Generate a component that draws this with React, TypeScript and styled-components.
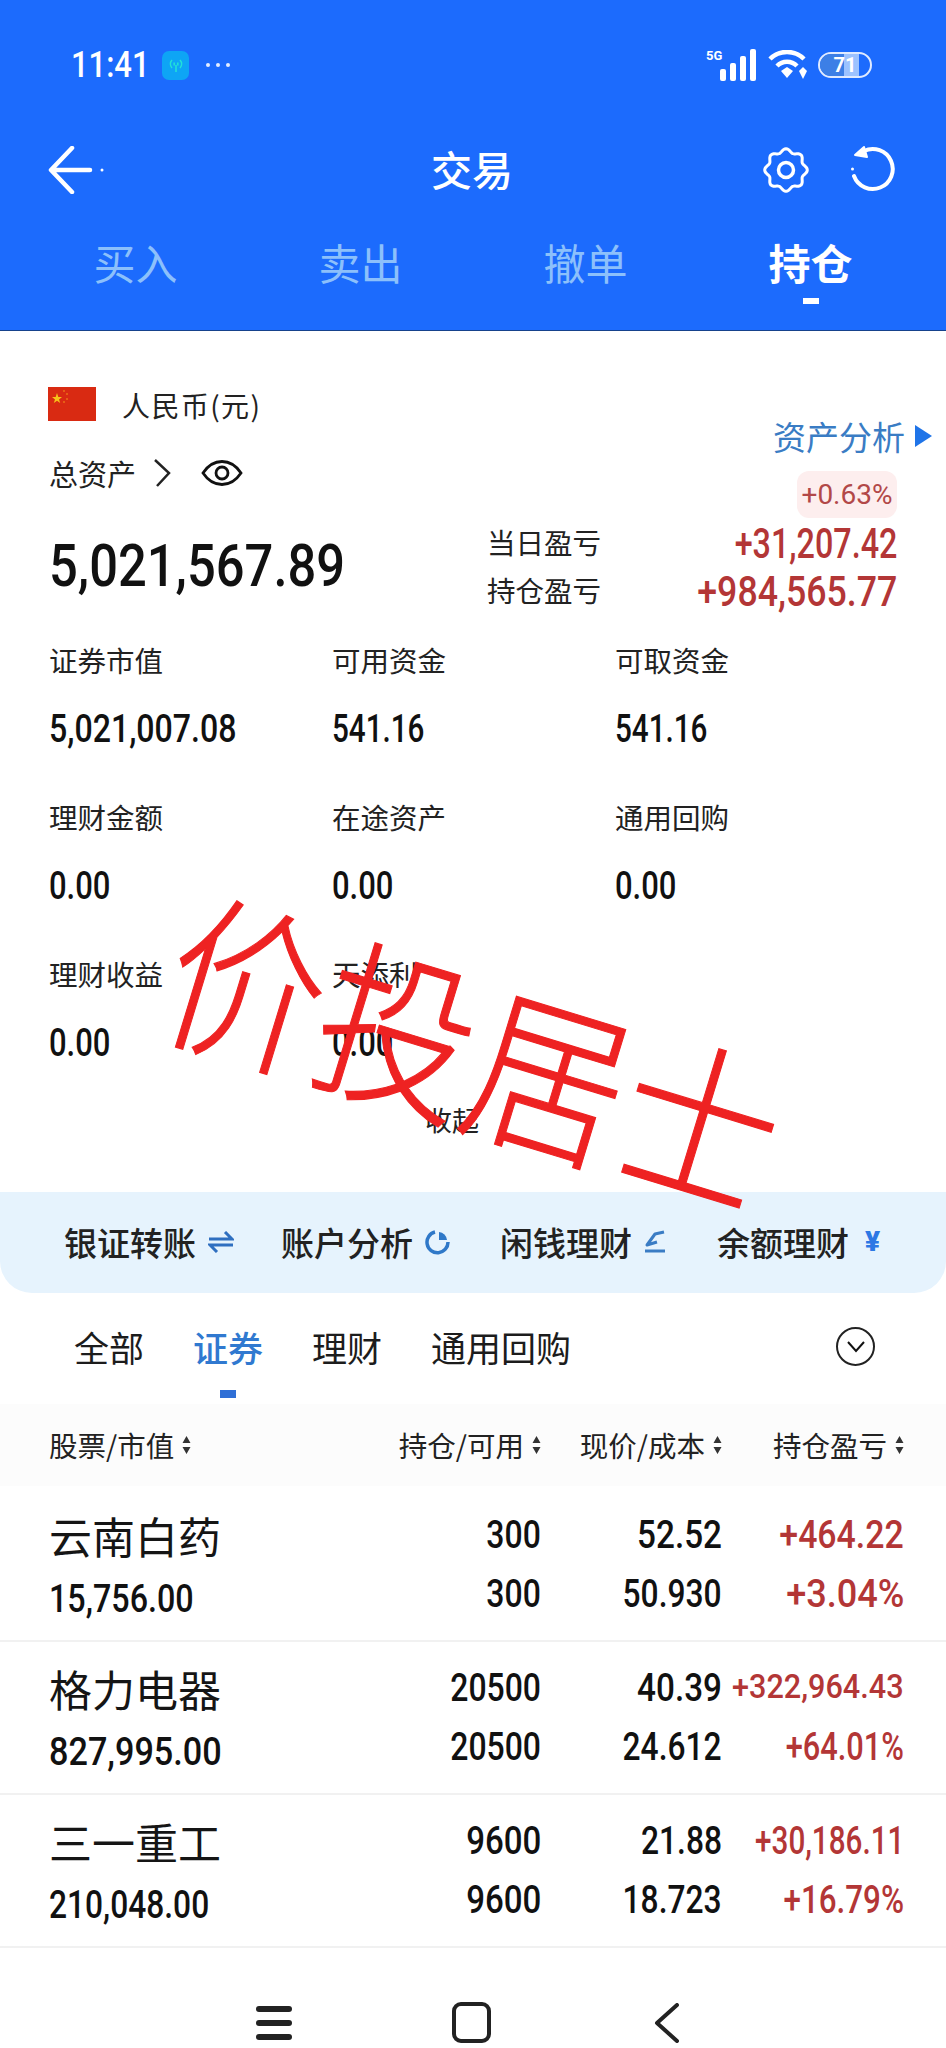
import styled, { createGlobalStyle } from 'styled-components';

const GlobalStyle = createGlobalStyle`
  html, body {
    margin: 0;
    padding: 0;
    background: #fff;
  }
  body {
    font-family: "Noto Sans CJK SC", "Liberation Sans", sans-serif;
    color: #1c1c1c;
  }
`;

// [text, horizontal squeeze of the digit run]
type Figure = [string, number];

const metrics: { label: string; value: Figure }[] = [
  { label: '证券市值', value: ['5,021,007.08', 0.845] },
  { label: '可用资金', value: ['541.16', 0.78] },
  { label: '可取资金', value: ['541.16', 0.78] },
  { label: '理财金额', value: ['0.00', 0.815] },
  { label: '在途资产', value: ['0.00', 0.815] },
  { label: '通用回购', value: ['0.00', 0.815] },
  { label: '理财收益', value: ['0.00', 0.815] },
  { label: '天添利', value: ['0.00', 0.815] },
];

const positions: {
  name: string;
  worth: Figure;
  hold: Figure;
  price: Figure;
  cost: Figure;
  profit: Figure;
  pct: Figure;
}[] = [
  {
    name: '云南白药',
    worth: ['15,756.00', 0.85],
    hold: ['300', 0.84],
    price: ['52.52', 0.875],
    cost: ['50.930', 0.835],
    profit: ['+464.22', 0.89],
    pct: ['+3.04%', 0.95],
  },
  {
    name: '格力电器',
    worth: ['827,995.00', 0.9],
    hold: ['20500', 0.84],
    price: ['40.39', 0.875],
    cost: ['24.612', 0.835],
    profit: ['+322,964.43', 0.9],
    pct: ['+64.01%', 0.81],
  },
  {
    name: '三一重工',
    worth: ['210,048.00', 0.835],
    hold: ['9600', 0.87],
    price: ['21.88', 0.835],
    cost: ['18.723', 0.835],
    profit: ['+30,186.11', 0.78],
    pct: ['+16.79%', 0.825],
  },
];

// eight soft lobes round the settings wheel
const gearPath = () => {
  const pts = Array.from({ length: 96 }, (_, i) => {
    const a = (i * 2 * Math.PI) / 96;
    const r = 19.5 + 1.8 * Math.cos(8 * a);
    return `${(23 + r * Math.cos(a)).toFixed(2)} ${(23 + r * Math.sin(a)).toFixed(2)}`;
  });
  return `M${pts.join(' L')}Z`;
};

const SortIcon = () => (
  <SortMark viewBox="0 0 9 20" width="9" height="20">
    <path d="M4.5 1 L8.5 8 H0.5Z M4.5 19 L8.5 12 H0.5Z" fill="#333" />
  </SortMark>
);

const App = () => {
  return (
    <Page>
      <GlobalStyle />
      <Header>
        <StatusBar>
          <Num $size={36} $scale={0.86} $weight={500} $color="#fff">11:41</Num>
          <AppBadge>
            <svg viewBox="0 0 20 20" width="20" height="20" fill="none" stroke="#22e0d8" strokeWidth="1.6">
              <path d="M6 5a6 6 0 0 0 0 8M14 5a6 6 0 0 1 0 8M8.5 7.500a3 3 0 0 0 0 3M11.500 7.500a3 3 0 0 1 0 3M10 10v7" />
            </svg>
          </AppBadge>
          <StatusDots>
            <span />
            <span />
            <span />
          </StatusDots>
          <StatusRight>
            <svg viewBox="0 0 52 34" width="52" height="34">
              <text x="0" y="12" fontSize="13" fontWeight="700" fill="#fff" fontFamily="Roboto">5G</text>
              <g fill="#fff">
                <rect x="14" y="21" width="6" height="12" rx="2" />
                <rect x="24" y="15" width="6" height="18" rx="2" />
                <rect x="34" y="8" width="6" height="25" rx="2" />
                <rect x="44" y="1" width="6" height="32" rx="2" />
              </g>
            </svg>
            <svg viewBox="0 0 40 30" width="40" height="30" fill="none" stroke="#fff" strokeWidth="4.500">
              <path d="M2 9a24 24 0 0 1 34 0M9 16a14 14 0 0 1 20 0" />
              <path d="M13 21l6-4 6 4-6 7z" fill="#fff" stroke="none" />
              <path d="M35 17l4 4-4 8-4-8z" fill="#fff" stroke="none" />
            </svg>
            <Battery>
              <BatteryFill />
              <BatteryText>71</BatteryText>
            </Battery>
          </StatusRight>
        </StatusBar>
        <NavRow>
          <svg viewBox="0 0 56 48" width="56" height="48" fill="none" stroke="#fff" strokeWidth="4.500" strokeLinecap="round" strokeLinejoin="round">
            <path d="M24 2 L3 24 L24 46M4 24H42" />
            <circle cx="54" cy="24" r="1.500" fill="#fff" stroke="none" />
          </svg>
          <NavTitle>交易</NavTitle>
          <NavActions>
            <svg viewBox="0 0 46 46" width="46" height="46" fill="none" stroke="#fff" strokeWidth="3">
              <path d={gearPath()} strokeLinejoin="round" />
              <circle cx="23" cy="23" r="7.500" strokeWidth="3.500" />
            </svg>
            <svg viewBox="0 0 46 50" width="46" height="50" fill="none" stroke="#fff" strokeWidth="4" strokeLinecap="round" strokeLinejoin="round">
              <path d="M14 6 A20 20 0 1 1 4 31" />
              <path d="M17 12 L5 10 L14 2Z" fill="#fff" strokeWidth="2" />
              <circle cx="2.500" cy="24" r="1.500" fill="#fff" stroke="none" />
            </svg>
          </NavActions>
        </NavRow>
        <HeaderTabs>
          {['买入', '卖出', '撤单', '持仓'].map((t, i) => (
            <HeaderTab key={t} $active={i === 3}>
              {t}
              {i === 3 && <HeaderTabMark />}
            </HeaderTab>
          ))}
        </HeaderTabs>
      </Header>

      <Summary>
        <SummaryLeft>
          <CurrencyRow>
            <Flag>
              <svg viewBox="0 0 48 34" width="48" height="34">
                <rect width="48" height="34" fill="#d92a12" />
                <path d="M9 6 L10.300 10 L14 10 L11 12.400 L12.200 16 L9 13.800 L5.800 16 L7 12.400 L4 10 L7.700 10Z" fill="#f6c21a" />
                <g fill="#f6a01a">
                  <circle cx="16" cy="4" r="0.800" />
                  <circle cx="19" cy="7" r="0.800" />
                  <circle cx="19" cy="12" r="0.800" />
                  <circle cx="16" cy="15" r="0.800" />
                </g>
              </svg>
            </Flag>
            <CurrencyName>人民币(元)</CurrencyName>
          </CurrencyRow>
          <TotalRow>
            <TotalLabel>总资产</TotalLabel>
            <svg viewBox="0 0 18 28" width="18" height="28" fill="none" stroke="#222" strokeWidth="2.500">
              <path d="M2 1 L16 14 L4 27" />
            </svg>
            <EyeIcon viewBox="0 0 42 26" width="42" height="26" fill="none" stroke="#111" strokeWidth="2.800">
              <path d="M2 13 C8 4 14 1.500 21 1.500 S34 4 40 13 C34 22 28 24.500 21 24.500 S8 22 2 13Z" />
              <circle cx="21" cy="13" r="6" />
            </EyeIcon>
          </TotalRow>
          <BigFigure>
            <Num $size={60} $scale={0.845} $weight={500} $color="#111">5,021,567.89</Num>
          </BigFigure>
        </SummaryLeft>
        <SummaryRight>
          <AnalysisLink>
            资产分析
            <svg viewBox="0 0 17 22" width="17" height="22">
              <path d="M0 0 L17 11 L0 22Z" fill="#1f74e8" />
            </svg>
          </AnalysisLink>
          <PctPill>
            <Num $size={28} $scale={1} $weight={400} $color="#b24848">+0.63%</Num>
          </PctPill>
          <ProfitRow>
            <ProfitLabel>当日盈亏</ProfitLabel>
            <Num $size={42} $scale={0.77} $weight={500} $color="#b33636" $right>+31,207.42</Num>
          </ProfitRow>
          <ProfitRow>
            <ProfitLabel>持仓盈亏</ProfitLabel>
            <Num $size={42} $scale={0.85} $weight={500} $color="#b33636" $right>+984,565.77</Num>
          </ProfitRow>
        </SummaryRight>
      </Summary>

      <MetricGrid>
        {metrics.map((m) => (
          <Metric key={m.label}>
            <MetricLabel>{m.label}</MetricLabel>
            <MetricValue>
              <Num $size={38} $scale={m.value[1]} $weight={500} $color="#111">{m.value[0]}</Num>
            </MetricValue>
          </Metric>
        ))}
      </MetricGrid>

      <Collapse>收起</Collapse>

      <QuickStrip>
        <QuickItem>
          银证转账
          <svg viewBox="0 0 26 22" width="26" height="22" fill="none" stroke="#2f6fc0" strokeWidth="3">
            <path d="M1 8H24L17 1M25 14H2L9 21" />
          </svg>
        </QuickItem>
        <QuickItem>
          账户分析
          <svg viewBox="0 0 26 26" width="26" height="26" fill="none" stroke="#2f78c8" strokeWidth="3.500">
            <path d="M10 3 A10.500 10.500 0 1 0 23 13" />
            <path d="M14 3 A9 9 0 0 1 22 11 H14Z" fill="#2f78c8" stroke="none" />
          </svg>
        </QuickItem>
        <QuickItem>
          闲钱理财
          <svg viewBox="0 0 22 24" width="22" height="24" fill="none" stroke="#3a7cc4" strokeWidth="3" strokeLinejoin="round">
            <path d="M20 2 L11 4 L3 15 L13 12" />
            <path d="M1 21H21" />
          </svg>
        </QuickItem>
        <QuickItem>
          余额理财
          <YuanMark>¥</YuanMark>
        </QuickItem>
      </QuickStrip>

      <ListTabs>
        {['全部', '证券', '理财', '通用回购'].map((t, i) => (
          <ListTab key={t} $active={i === 1}>
            {t}
            {i === 1 && <ListTabMark />}
          </ListTab>
        ))}
        <ExpandButton>
          <svg viewBox="0 0 22 14" width="22" height="14" fill="none" stroke="#111" strokeWidth="2">
            <path d="M3 2 L11 11 L19 2" />
          </svg>
        </ExpandButton>
      </ListTabs>

      <TableHead>
        <HeadCell>股票/市值<SortIcon /></HeadCell>
        <HeadCell $right>持仓/可用<SortIcon /></HeadCell>
        <HeadCell $right>现价/成本<SortIcon /></HeadCell>
        <HeadCell $right>持仓盈亏<SortIcon /></HeadCell>
      </TableHead>

      <Rows>
        {positions.map((p) => (
          <Row key={p.name}>
            <NameCell>
              <StockName>{p.name}</StockName>
              <StockWorth>
                <Num $size={38} $scale={p.worth[1]} $weight={500} $color="#111">{p.worth[0]}</Num>
              </StockWorth>
            </NameCell>
            <ValueCell>
              <ValueLine><Num $size={38} $scale={p.hold[1]} $weight={500} $color="#111" $right>{p.hold[0]}</Num></ValueLine>
              <ValueLine><Num $size={38} $scale={p.hold[1]} $weight={500} $color="#111" $right>{p.hold[0]}</Num></ValueLine>
            </ValueCell>
            <ValueCell>
              <ValueLine><Num $size={38} $scale={p.price[1]} $weight={500} $color="#111" $right>{p.price[0]}</Num></ValueLine>
              <ValueLine><Num $size={38} $scale={p.cost[1]} $weight={500} $color="#111" $right>{p.cost[0]}</Num></ValueLine>
            </ValueCell>
            <ValueCell>
              <ValueLine>
                <Num $size={p.profit[0].length > 10 ? 34 : 38} $scale={p.profit[1]} $weight={500} $color="#b33636" $right>{p.profit[0]}</Num>
              </ValueLine>
              <ValueLine><Num $size={38} $scale={p.pct[1]} $weight={500} $color="#b33636" $right>{p.pct[0]}</Num></ValueLine>
            </ValueCell>
          </Row>
        ))}
      </Rows>

      <SystemBar>
        <MenuGlyph>
          <span />
          <span />
          <span />
        </MenuGlyph>
        <HomeGlyph />
        <svg viewBox="0 0 25 40" width="25" height="40" fill="none" stroke="#222" strokeWidth="4" strokeLinecap="round" strokeLinejoin="round">
          <path d="M23 2 L3 20 L23 38" />
        </svg>
      </SystemBar>

      <Stamp>价投居士</Stamp>
    </Page>
  );
};

const Page = styled.div`
  position: relative;
  width: 946px;
  height: 2048px;
  overflow: hidden;
  background: #fff;
`;

const Num = styled.span<{ $size: number; $scale: number; $weight: number; $color: string; $right?: boolean }>`
  display: inline-block;
  font-family: Roboto, "Liberation Sans", sans-serif;
  font-size: ${({ $size }) => $size}px;
  font-weight: ${({ $weight }) => $weight};
  color: ${({ $color }) => $color};
  line-height: 1;
  white-space: nowrap;
  transform: scaleX(${({ $scale }) => $scale});
  transform-origin: ${({ $right }) => ($right ? 'right' : 'left')} center;
`;

const Header = styled.header`
  height: 331px;
  background: #1c6bfd;
  box-sizing: border-box;
  border-bottom: 1px solid #16428c;
`;

const StatusBar = styled.div`
  display: flex;
  align-items: center;
  height: 130px;
  padding: 0 74px 0 71px;
  box-sizing: border-box;
`;

const AppBadge = styled.div`
  display: flex;
  align-items: center;
  justify-content: center;
  width: 27px;
  height: 29px;
  border-radius: 7px;
  background: #0ea5f5;
`;

const StatusDots = styled.div`
  display: flex;
  gap: 6px;
  margin-left: 17px;
  span {
    width: 4px;
    height: 4px;
    border-radius: 50%;
    background: #e4eeff;
  }
`;

const StatusRight = styled.div`
  display: flex;
  align-items: center;
  gap: 10px;
  margin-left: auto;
`;

const Battery = styled.div`
  position: relative;
  width: 54px;
  height: 26px;
  box-sizing: border-box;
  border: 2.5px solid #dfeaff;
  border-radius: 13px;
  overflow: hidden;
`;

const BatteryFill = styled.div`
  width: 78%;
  height: 100%;
  background: linear-gradient(90deg, #3c7fe6 0%, #3c7fe6 62%, #9cc2ff 62%, #9cc2ff 100%);
`;

const BatteryText = styled.span`
  position: absolute;
  inset: 0;
  display: flex;
  align-items: center;
  justify-content: center;
  font-family: Roboto, sans-serif;
  font-size: 20px;
  font-weight: 700;
  color: #fff;
`;

const NavRow = styled.div`
  display: flex;
  align-items: center;
  height: 80px;
  padding: 0 50px 0 48px;
  box-sizing: border-box;
`;

const NavTitle = styled.div`
  margin: -3px 0 0 327px;
  font-size: 41px;
  font-weight: 500;
  line-height: 1;
  color: #fff;
`;

const NavActions = styled.div`
  display: flex;
  align-items: center;
  gap: 41px;
  margin-left: auto;
`;

const HeaderTabs = styled.div`
  display: grid;
  grid-template-columns: repeat(4, 225px);
  padding: 0 22px 0 23px;
`;

const HeaderTab = styled.div<{ $active: boolean }>`
  display: flex;
  flex-direction: column;
  align-items: center;
  padding-top: 29px;
  font-size: 42px;
  line-height: 46px;
  font-weight: ${({ $active }) => ($active ? 700 : 400)};
  color: ${({ $active }) => ($active ? '#fff' : '#8cc0fb')};
`;

const HeaderTabMark = styled.span`
  width: 16px;
  height: 6px;
  margin-top: 13px;
  background: #fff;
`;

const Summary = styled.section`
  display: flex;
  justify-content: space-between;
  height: 285px;
`;

const SummaryLeft = styled.div`
  padding: 56px 0 0 48px;
`;

const CurrencyRow = styled.div`
  display: flex;
  align-items: center;
  gap: 26px;
  height: 34px;
`;

const Flag = styled.div`
  display: flex;
  width: 48px;
  height: 34px;
`;

const CurrencyName = styled.span`
  padding-top: 2px;
  font-size: 28px;
  letter-spacing: 1.4px;
  line-height: 34px;
  color: #222;
`;

const TotalRow = styled.div`
  display: flex;
  align-items: center;
  height: 28px;
  margin: 38px 0 0 1px;
`;

const TotalLabel = styled.span`
  width: 104px;
  font-size: 29px;
  line-height: 28px;
  color: #222;
`;

const EyeIcon = styled.svg`
  margin-left: 30px;
`;

const BigFigure = styled.div`
  height: 60px;
  margin: 49px 0 0 1px;
`;

const SummaryRight = styled.div`
  display: flex;
  flex-direction: column;
  align-items: flex-end;
  padding: 85px 14px 0 0;
`;

const AnalysisLink = styled.div`
  display: flex;
  align-items: center;
  gap: 10px;
  height: 40px;
  font-size: 33px;
  line-height: 40px;
  color: #3a7cc4;
`;

const PctPill = styled.div`
  display: flex;
  align-items: center;
  justify-content: center;
  width: 100px;
  height: 47px;
  margin: 15px 35px 0 0;
  border-radius: 12px;
  background: #fdeeee;
`;

const ProfitRow = styled.div`
  display: flex;
  align-items: center;
  justify-content: space-between;
  width: 410px;
  height: 48px;
  margin-right: 35px;
  padding-top: 2px;
  box-sizing: content-box;
  &:nth-of-type(4) {
    margin-top: -2px;
  }
`;

const ProfitLabel = styled.span`
  margin-top: -5px;
  font-size: 28.5px;
  color: #222;
`;

const MetricGrid = styled.section`
  display: grid;
  grid-template-columns: 283px 283px 1fr;
  row-gap: 47px;
  padding: 24px 0 0 49px;
`;

const Metric = styled.div`
  display: flex;
  flex-direction: column;
`;

const MetricLabel = styled.div`
  font-size: 28.5px;
  line-height: 40px;
  color: #222;
`;

const MetricValue = styled.div`
  height: 40px;
  margin-top: 30px;
  line-height: 40px;
`;

const Collapse = styled.div`
  margin-top: 36px;
  padding-right: 42px;
  font-size: 27px;
  line-height: 40px;
  text-align: center;
  color: #222;
`;

const QuickStrip = styled.section`
  display: grid;
  grid-template-columns: 217px 219px 217px 1fr;
  align-items: center;
  height: 101px;
  margin-top: 52px;
  padding: 0 0 2px 64px;
  box-sizing: border-box;
  background: #e6f3fd;
  border-radius: 0 0 32px 32px;
`;

const QuickItem = styled.div`
  display: flex;
  align-items: center;
  gap: 12px;
  font-size: 33px;
  font-weight: 500;
  line-height: 40px;
  color: #222;
`;

const YuanMark = styled.span`
  font-family: Roboto, sans-serif;
  font-size: 28px;
  font-weight: 900;
  color: #2c78e4;
  margin-left: 4px;
`;

const ListTabs = styled.nav`
  display: flex;
  align-items: flex-start;
  gap: 49px;
  padding: 34px 71px 0 74px;
`;

const ListTab = styled.div<{ $active: boolean }>`
  display: flex;
  flex-direction: column;
  align-items: center;
  font-size: 35px;
  line-height: 40px;
  font-weight: ${({ $active }) => ($active ? 500 : 400)};
  color: ${({ $active }) => ($active ? '#3079d0' : '#1c1c1c')};
`;

const ListTabMark = styled.span`
  width: 16px;
  height: 8px;
  margin-top: 23px;
  background: #2f6fd6;
`;

const ExpandButton = styled.div`
  display: flex;
  align-items: center;
  justify-content: center;
  width: 39px;
  height: 39px;
  margin-left: auto;
  box-sizing: border-box;
  border: 2px solid #222;
  border-radius: 50%;
`;

const rowColumns = '311px 181px 181px 182px';

const TableHead = styled.div`
  display: grid;
  grid-template-columns: ${rowColumns};
  align-items: center;
  height: 82px;
  margin-top: 6px;
  padding-left: 49px;
  background: #fcfcfc;
`;

const HeadCell = styled.div<{ $right?: boolean }>`
  display: flex;
  align-items: center;
  justify-content: ${({ $right }) => ($right ? 'flex-end' : 'flex-start')};
  gap: 8px;
  font-size: 28.5px;
  line-height: 40px;
  color: #222;
`;

const SortMark = styled.svg`
  flex: none;
`;

const Rows = styled.div`
  margin-top: 3px;
`;

const Row = styled.div`
  display: grid;
  grid-template-columns: ${rowColumns};
  height: 153px;
  padding-left: 49px;
  box-sizing: border-box;
  border-bottom: 2px solid #f1f1f1;
`;

const NameCell = styled.div`
  padding-top: 21px;
`;

const StockName = styled.div`
  font-size: 43px;
  line-height: 50px;
  color: #151515;
`;

const StockWorth = styled.div`
  height: 38px;
  margin-top: 20px;
`;

const ValueCell = styled.div`
  display: flex;
  flex-direction: column;
  align-items: flex-end;
  gap: 21px;
  padding-top: 27px;
`;

const ValueLine = styled.div`
  height: 38px;
`;

const SystemBar = styled.div`
  display: grid;
  grid-template-columns: 196px 202px 25px;
  align-items: center;
  height: 40px;
  margin-top: 54px;
  padding-left: 256px;
`;

const MenuGlyph = styled.div`
  display: flex;
  flex-direction: column;
  justify-content: space-between;
  width: 36px;
  height: 34px;
  span {
    height: 6px;
    border-radius: 3px;
    background: #222;
  }
`;

const HomeGlyph = styled.div`
  width: 39px;
  height: 41px;
  box-sizing: border-box;
  border: 4.5px solid #222;
  border-radius: 9px;
`;

// Red signature laid across the account block
const Stamp = styled.div`
  position: absolute;
  left: 160px;
  top: 968px;
  width: 632px;
  font-size: 158px;
  font-weight: 300;
  line-height: 1;
  white-space: nowrap;
  color: #ee2222;
  -webkit-text-stroke: 1px #ee2222;
  transform: rotate(17deg) scaleY(1.1);
  pointer-events: none;
`;

export default App;
